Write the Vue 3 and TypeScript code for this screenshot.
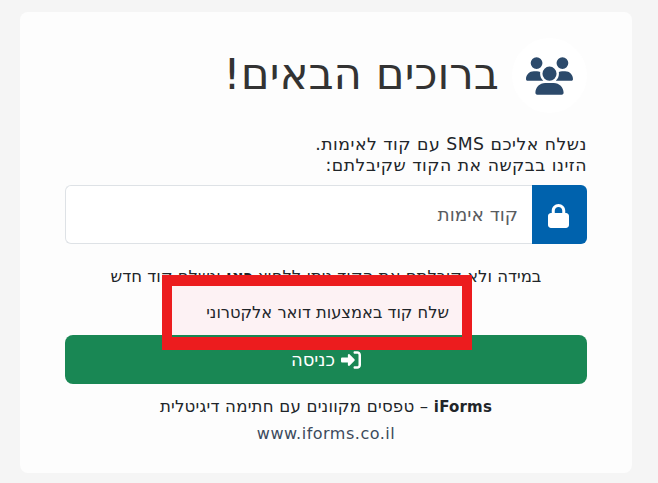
<script setup lang="ts">
const title = 'ברוכים הבאים!'
</script>

<template>
  <div class="page" dir="rtl">
    <main class="card">
      <header class="head">
        <span class="badge">
          <svg viewBox="0 0 640 512" width="47" height="38" aria-hidden="true">
            <path fill="#2c4a6b" d="M144 0a80 80 0 1 1 0 160A80 80 0 1 1 144 0zM496 0a80 80 0 1 1 0 160A80 80 0 1 1 496 0zM0 298.700C0 239.800 47.800 192 106.700 192h42.700c15.900 0 31 3.500 44.600 9.700-1.300 7.200-1.900 14.700-1.900 22.300 0 38.200 16.800 72.500 43.300 96H21.300C9.600 320 0 310.400 0 298.700zM405.300 320c26.600-23.500 43.300-57.800 43.300-96 0-7.600-.7-15-1.900-22.300 13.600-6.300 28.700-9.700 44.600-9.700h42.700C592.200 192 640 239.800 640 298.700c0 11.800-9.600 21.300-21.300 21.300H405.300zM224 224a96 96 0 1 1 192 0 96 96 0 1 1-192 0zM128 485.300C128 411.700 187.700 352 261.300 352h117.300C452.300 352 512 411.700 512 485.300c0 14.700-11.900 26.700-26.700 26.700H154.700c-14.700 0-26.700-11.900-26.700-26.700z"/>
          </svg>
        </span>
        <h1 class="title">{{ title }}</h1>
      </header>

      <p class="intro">נשלח אליכם SMS עם קוד לאימות.<br />הזינו בבקשה את הקוד שקיבלתם:</p>

      <div class="field">
        <span class="addon">
          <svg viewBox="0 0 448 512" width="21" height="24" aria-hidden="true">
            <path fill="#fff" d="M144 144v48h160v-48c0-44.200-35.800-80-80-80s-80 35.800-80 80zM80 192v-48C80 64.500 144.500 0 224 0s144 64.500 144 144v48h16c35.300 0 64 28.700 64 64v192c0 35.300-28.700 64-64 64H64c-35.300 0-64-28.700-64-64V256c0-35.300 28.700-64 64-64h16z"/>
          </svg>
        </span>
        <input class="code" type="text" placeholder="קוד אימות" />
      </div>

      <p class="resend">במידה ולא קיבלתם את הקוד ניתן ללחוץ <b>כאן</b> ונשלח קוד חדש</p>

      <button class="enter" type="button">
        <svg viewBox="0 0 512 512" width="20" height="20" aria-hidden="true">
          <path fill="#fff" d="M352 96h64c17.700 0 32 14.300 32 32v256c0 17.700-14.300 32-32 32h-64c-17.700 0-32 14.300-32 32s14.300 32 32 32h64c53 0 96-43 96-96V128c0-53-43-96-96-96h-64c-17.700 0-32 14.300-32 32s14.300 32 32 32zM345 273c9.400-9.400 9.400-24.600 0-33.900L217 111c-6.900-6.900-17.200-8.900-26.200-5.200S176 118.300 176 128v64H32c-17.700 0-32 14.300-32 32v64c0 17.700 14.300 32 32 32h144v64c0 9.700 5.800 18.500 14.800 22.200s19.300 1.700 26.200-5.200l128-128z"/>
        </svg>
        <span>כניסה</span>
      </button>

      <p class="brand"><b>iForms</b> – טפסים מקוונים עם חתימה דיגיטלית</p>
      <a class="site" href="#">www.iforms.co.il</a>

      <div class="callout"><div class="callout-fill">שלח קוד באמצעות דואר אלקטרוני</div></div>
    </main>
  </div>
</template>

<style>
html, body { margin: 0; background: #f5f5f5; }
</style>

<style scoped>
.page {
  width: 658px;
  height: 483px;
  padding: 12px 26px 10px 20px;
  box-sizing: border-box;
  font-family: "DejaVu Sans", sans-serif;
  color: #212529;
  overflow: hidden;
}
.card {
  position: relative;
  height: 461px;
  box-sizing: border-box;
  background: #fdfdfd;
  border-radius: 8px;
  padding: 26px 45px 0;
  display: flex;
  flex-direction: column;
}
.head {
  display: flex;
  align-items: center;
  gap: 13px;
  height: 75px;
}
.badge {
  width: 75px;
  height: 75px;
  border-radius: 50%;
  background: #fff;
  display: flex;
  align-items: center;
  justify-content: center;
  flex: none;
}
.title {
  margin: -2px 0 0;
  font-size: 43.5px;
  font-weight: 400;
  line-height: 1.2;
  color: #333;
}
.intro {
  margin: 21px 0 0;
  font-size: 17.25px;
  line-height: 21px;
  letter-spacing: 0.5px;
  color: #212529;
}
.field {
  display: flex;
  height: 59px;
  margin-top: 9px;
}
.addon {
  width: 55px;
  flex: none;
  box-sizing: border-box;
  padding: 3px 0 0 0;
  padding-inline-start: 2px;
  display: flex;
  align-items: center;
  justify-content: center;
  background: #0062ad;
  border-radius: 0 6px 6px 0;
}
.code {
  flex: 1;
  min-width: 0;
  box-sizing: border-box;
  border: 1px solid #dee2e6;
  border-right: 0;
  border-radius: 6px 0 0 6px;
  background: #fff;
  padding: 0 14px;
  font: inherit;
  font-size: 18.5px;
  outline: none;
}
.code::placeholder { color: #595c5f; opacity: 1; }
.resend {
  margin: 22px 0 0;
  text-align: center;
  font-size: 16.5px;
  line-height: 21px;
}
.enter {
  margin-top: 48px;
  height: 49px;
  border: 0;
  border-radius: 8px;
  background: #198754;
  color: #fff;
  font: inherit;
  font-size: 18px;
  display: flex;
  align-items: center;
  justify-content: center;
  gap: 6px;
}
.brand {
  margin: 12px 0 0;
  text-align: center;
  font-size: 16.6px;
  line-height: 21px;
  letter-spacing: 0.2px;
}
.brand b { font-size: 15px; }
.site {
  margin-top: 6px;
  text-align: center;
  font-size: 16px;
  line-height: 20px;
  color: #3c4a5c;
  letter-spacing: 0.5px;
  text-decoration: none;
}
.callout {
  position: absolute;
  left: 142px;
  top: 263px;
  width: 310px;
  height: 75px;
  box-sizing: border-box;
  border: solid #ec1c1e;
  border-width: 11px 10px 13px;
}
.callout-fill {
  height: 49px;
  box-sizing: border-box;
  background: #fdf2f4;
  padding: 3px 13px 0;
  display: flex;
  align-items: center;
  font-size: 16.3px;
  color: #212529;
}
</style>
